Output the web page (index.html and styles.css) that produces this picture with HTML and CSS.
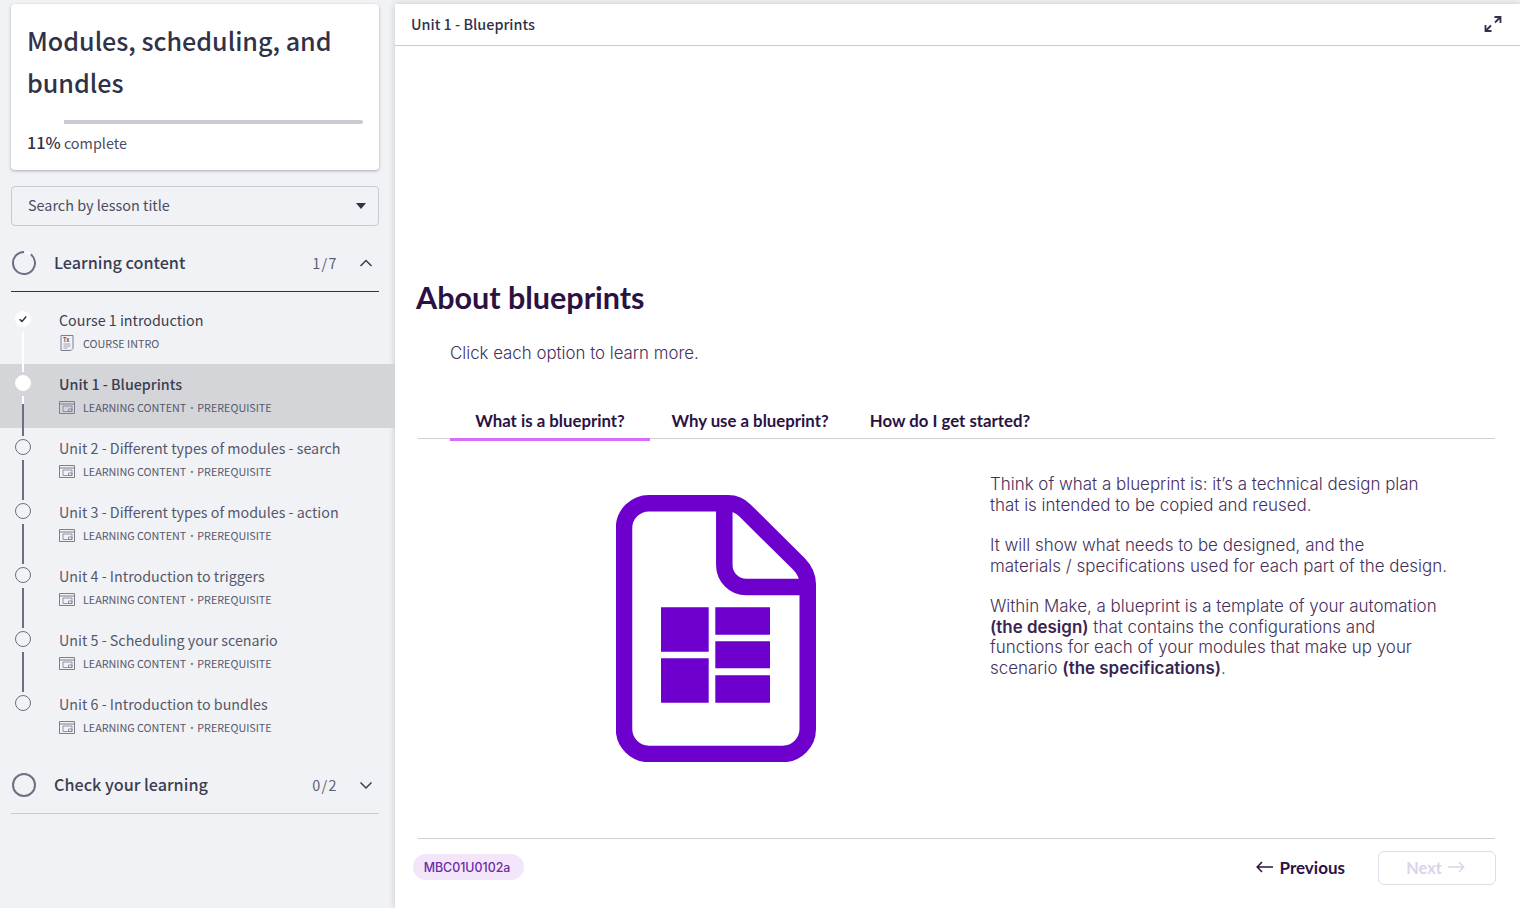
FILE: index.html
```html
<!DOCTYPE html>
<html lang="en">
<head>
<meta charset="utf-8">
<title>Unit 1 - Blueprints</title>
<link rel="stylesheet" href="styles.css">
</head>
<body>
<div class="app">
  <aside class="sidebar">
    <div class="card">
      <h1 class="course-title">Modules, scheduling, and bundles</h1>
      <div class="progress"><div class="progress-fill"></div></div>
      <div class="progress-label"><b>11%</b> complete</div>
    </div>
    <div class="search"><span>Search by lesson title</span><i class="caret"></i></div>

    <div class="section-head open">
      <svg class="ring" viewBox="0 0 24 24"><circle cx="12" cy="12" r="11" fill="none" stroke="#fff" stroke-width="2"/><circle cx="12" cy="12" r="11" fill="none" stroke="#6d7085" stroke-width="2" stroke-dasharray="61.5 7.6" transform="rotate(-52 12 12)"/></svg>
      <span class="section-title">Learning content</span>
      <span class="section-count">1/7</span>
      <svg class="chev" viewBox="0 0 14 14"><path d="M1.5 10 7 4.5 12.5 10" fill="none" stroke="#3a3d52" stroke-width="1.5"/></svg>
    </div>

    <ul class="lessons">
      <li class="lesson done">
        <span class="dot"><svg viewBox="0 0 16 16"><path d="M4.6 8.2 7 10.4 11.2 5.6" fill="none" stroke="#2f3248" stroke-width="1.5"/></svg></span>
        <div class="lesson-title">Course 1 introduction</div>
        <div class="lesson-meta">
          <svg class="doc-mini" viewBox="0 0 16 16"><path d="M2 .5h12v13l-2 2H2z" fill="none" stroke="#7c7f90"/><text x="4" y="6.8" class="tx">Tx</text><path d="M4.5 9h7M4.5 11h7M4.5 13h4" stroke="#8f91a0" fill="none" stroke-width=".8"/></svg>
          <span>COURSE INTRO</span>
        </div>
      </li>
      <li class="lesson current">
        <span class="dot"></span>
        <div class="lesson-title">Unit 1 - Blueprints</div>
        <div class="lesson-meta">
          <svg class="win" viewBox="0 0 16 13"><path d="M.5.5h15v12H.5zM.5 3h15" fill="none" stroke="#7c7f90"/><path d="M4 5h9v5.500H4zM9.500 8h3.500v2.500H9.500z" fill="none" stroke="#7c7f90" stroke-width=".8"/></svg>
          <span>LEARNING CONTENT<span class="sep">·</span>PREREQUISITE</span>
        </div>
      </li>
      <li class="lesson">
        <span class="dot"></span>
        <div class="lesson-title">Unit 2 - Different types of modules - search</div>
        <div class="lesson-meta">
          <svg class="win" viewBox="0 0 16 13"><path d="M.5.5h15v12H.5zM.5 3h15" fill="none" stroke="#7c7f90"/><path d="M4 5h9v5.500H4zM9.500 8h3.500v2.500H9.500z" fill="none" stroke="#7c7f90" stroke-width=".8"/></svg>
          <span>LEARNING CONTENT<span class="sep">·</span>PREREQUISITE</span>
        </div>
      </li>
      <li class="lesson">
        <span class="dot"></span>
        <div class="lesson-title">Unit 3 - Different types of modules - action</div>
        <div class="lesson-meta">
          <svg class="win" viewBox="0 0 16 13"><path d="M.5.5h15v12H.5zM.5 3h15" fill="none" stroke="#7c7f90"/><path d="M4 5h9v5.500H4zM9.500 8h3.500v2.500H9.500z" fill="none" stroke="#7c7f90" stroke-width=".8"/></svg>
          <span>LEARNING CONTENT<span class="sep">·</span>PREREQUISITE</span>
        </div>
      </li>
      <li class="lesson">
        <span class="dot"></span>
        <div class="lesson-title">Unit 4 - Introduction to triggers</div>
        <div class="lesson-meta">
          <svg class="win" viewBox="0 0 16 13"><path d="M.5.5h15v12H.5zM.5 3h15" fill="none" stroke="#7c7f90"/><path d="M4 5h9v5.500H4zM9.500 8h3.500v2.500H9.500z" fill="none" stroke="#7c7f90" stroke-width=".8"/></svg>
          <span>LEARNING CONTENT<span class="sep">·</span>PREREQUISITE</span>
        </div>
      </li>
      <li class="lesson">
        <span class="dot"></span>
        <div class="lesson-title">Unit 5 - Scheduling your scenario</div>
        <div class="lesson-meta">
          <svg class="win" viewBox="0 0 16 13"><path d="M.5.5h15v12H.5zM.5 3h15" fill="none" stroke="#7c7f90"/><path d="M4 5h9v5.500H4zM9.500 8h3.500v2.500H9.500z" fill="none" stroke="#7c7f90" stroke-width=".8"/></svg>
          <span>LEARNING CONTENT<span class="sep">·</span>PREREQUISITE</span>
        </div>
      </li>
      <li class="lesson last">
        <span class="dot"></span>
        <div class="lesson-title">Unit 6 - Introduction to bundles</div>
        <div class="lesson-meta">
          <svg class="win" viewBox="0 0 16 13"><path d="M.5.5h15v12H.5zM.5 3h15" fill="none" stroke="#7c7f90"/><path d="M4 5h9v5.500H4zM9.500 8h3.500v2.500H9.500z" fill="none" stroke="#7c7f90" stroke-width=".8"/></svg>
          <span>LEARNING CONTENT<span class="sep">·</span>PREREQUISITE</span>
        </div>
      </li>
    </ul>

    <div class="section-head closed">
      <svg class="ring" viewBox="0 0 24 24"><circle cx="12" cy="12" r="11" fill="none" stroke="#6d7085" stroke-width="2"/></svg>
      <span class="section-title">Check your learning</span>
      <span class="section-count">0/2</span>
      <svg class="chev" viewBox="0 0 14 14"><path d="M1.5 4.500 7 10l5.500-5.500" fill="none" stroke="#3a3d52" stroke-width="1.500"/></svg>
    </div>
  </aside>

  <main class="main">
    <header class="topbar">
      <span class="topbar-title">Unit 1 - Blueprints</span>
      <svg class="expand" viewBox="0 0 18 18"><path d="M10.500 2h6v6M16 2.500 11 7.500M7.500 16h-6v-6M2 15.500 7 10.500" fill="none" stroke="#2f3248" stroke-width="1.800"/></svg>
    </header>
    <div class="content">
      <h2 class="page-title">About blueprints</h2>
      <p class="intro">Click each option to learn more.</p>
      <div class="tabs">
        <div class="tab active">What is a blueprint?</div>
        <div class="tab">Why use a blueprint?</div>
        <div class="tab">How do I get started?</div>
      </div>
      <div class="panel">
        <div class="panel-art">
          <svg class="blueprint" viewBox="0 0 200 267">
            <path d="M33 8.250H112Q122 8.250 129 15.500L183 69Q191.750 78 191.750 89V234a25 25 0 0 1-25 25H33a25 25 0 0 1-25-25V33A25 25 0 0 1 33 8.250Z" fill="none" stroke="#6d00cc" stroke-width="16.500"/>
            <path d="M108.300 8.250V70a22 22 0 0 0 22 22H191.750" fill="none" stroke="#6d00cc" stroke-width="16.500"/>
            <path d="M45 112.300h47.700v44.400H45zM45 163.300h47.700v44.400H45zM99.300 112.300H154v27.400H99.300zM99.300 146.300H154v27H99.300zM99.300 180.300H154v27.400H99.300z" fill="#6d00cc"/>
          </svg>
        </div>
        <div class="panel-text">
          <p>Think of what a blueprint is: it’s a technical design plan<br>that is intended to be copied and reused.</p>
          <p>It will show what needs to be designed, and the<br>materials / specifications used for each part of the design.</p>
          <p>Within Make, a blueprint is a template of your automation<br><b>(the design)</b> that contains the configurations and<br>functions for each of your modules that make up your<br>scenario <b>(the specifications)</b>.</p>
        </div>
      </div>
    </div>
    <footer class="footer">
      <span class="pill">MBC01U0102a</span>
      <div class="nav">
        <span class="prev"><svg class="arrow" viewBox="0 0 18 12"><path d="M6 1 1.200 6 6 11M1.500 6H17" fill="none" stroke="currentColor" stroke-width="1.500"/></svg>Previous</span>
        <span class="next">Next<svg class="arrow" viewBox="0 0 18 12"><path d="M12 1l4.800 5L12 11M16.500 6H1" fill="none" stroke="currentColor" stroke-width="1.500"/></svg></span>
      </div>
    </footer>
  </main>
</div>
</body>
</html>
```

FILE: styles.css
```css
* { box-sizing: border-box; }
html, body { margin: 0; padding: 0; height: 908px; overflow: hidden; }
body { background: #f1f2f5; font-family: "Noto Sans CJK SC", "Noto Sans", sans-serif; color: #2f3248; }
.app { display: flex; height: 908px; }

.sidebar { width: 395px; flex: none; padding-top: 4px; }
.card { margin: 0 16px 16px 11px; height: 166px; padding: 15px 16px 0; background: #fff; border-radius: 4px; box-shadow: 0 1px 3px rgba(30, 32, 50, .35); }
.course-title { margin: 0; font-size: 25.100px; line-height: 42px; font-weight: 500; color: #2f3248; }
.progress { margin-top: 17px; height: 4px; background: #c9cbd4; border-radius: 2px; }
.progress-fill { width: 37px; height: 4px; background: #fff; }
.progress-label { margin-top: 7px; font-size: 14.400px; line-height: 22px; color: #4a4d62; }
.progress-label b { font-size: 16.200px; font-weight: 500; color: #2f3248; }

.search { margin: 0 16px 12px 11px; height: 40px; display: flex; align-items: center; justify-content: space-between; padding: 0 12px 2px 16px; border: 1px solid #c9cbd4; border-radius: 4px; font-size: 14.400px; line-height: 22px; color: #4a4d62; }
.caret { width: 0; height: 0; border-left: 5px solid transparent; border-right: 5px solid transparent; border-top: 6px solid #2f3248; margin-top: 2px; }

.section-head { margin: 0 16px 0 11px; height: 54px; display: flex; align-items: center; padding-left: 1px; }
.section-head.open { border-bottom: 1px solid #2f3248; padding-bottom: 3px; }
.section-head.closed { height: 58px; margin-top: 8px; border-bottom: 1px solid #c9cbd4; }
.ring { width: 24px; height: 24px; flex: none; }
.section-title { margin-left: 18px; margin-top: -1px; flex: 1; font-size: 16.200px; line-height: 24px; font-weight: 500; color: #3a3d52; }
.open .section-title { margin-top: -3px; }
.section-count { font-size: 14.400px; letter-spacing: 1.400px; color: #5c5f73; line-height: 22px; }
.chev { width: 14px; height: 14px; margin-left: 21px; margin-right: 6px; flex: none; }

.lessons { list-style: none; margin: 8px 0 0; padding: 0; }
.lesson { position: relative; height: 64px; padding: 8px 0 0 59px; }
.lesson.current { background: #d4d5d9; }
.lesson::after { content: ""; position: absolute; left: 22px; top: 32px; width: 2px; height: 40px; background: #6d7085; z-index: 1; }
.lesson.done::after { background: #fff; }
.lesson.current::after { background: linear-gradient(#fff 0 8px, #6d7085 8px); }
.lesson.last::after { display: none; }
.dot { position: absolute; left: 15px; top: 11px; width: 16px; height: 16px; border-radius: 50%; border: 1px solid #6d7085; }
.done .dot, .current .dot { background: #fff; border-color: #fff; }
.done .dot svg { display: block; width: 16px; height: 16px; margin: -1px; }
.lesson-title { font-size: 14.300px; line-height: 24px; color: #55586c; white-space: nowrap; }
.done .lesson-title { color: #3a3d52; }
.current .lesson-title { font-weight: 500; color: #3a3d52; }
.lesson-meta { display: flex; align-items: center; gap: 8px; height: 22px; font-size: 10.750px; color: #55586c; white-space: nowrap; }
.sep { display: inline-block; width: 11px; text-align: center; color: #7c7f90; }
.win, .doc-mini { width: 16px; flex: none; }
.win { height: 13px; }
.doc-mini { height: 16px; }
.tx { font-size: 5.500px; font-weight: 700; fill: #55586c; }

.main { flex: 1; margin-top: 4px; display: flex; flex-direction: column; background: #fff; box-shadow: 0 0 7px rgba(30, 32, 50, .2); }
.topbar { height: 42px; flex: none; display: flex; align-items: center; justify-content: space-between; padding: 0 18px 0 16px; border-bottom: 1px solid #c9cbd4; }
.topbar-title { font-size: 14.400px; font-weight: 500; color: #2f3248; line-height: 22px; margin-top: -1px; }
.expand { width: 18px; height: 18px; margin-top: -1px; }

.content { flex: 1; padding: 230px 25px 0 21px; font-family: Inter, sans-serif; }
.page-title { margin: 0; font-family: Lato, sans-serif; font-size: 30.500px; line-height: 42px; font-weight: 700; color: #2b1243; }
.intro { margin: 23px 0 0 34px; font-size: 16.850px; line-height: 24px; font-weight: 300; color: #45305c; }
.tabs { margin: 36px 0 0 2px; display: flex; padding-left: 32px; border-bottom: 1px solid #d4ccd8; height: 38px; }
.tab { width: 200px; height: 40px; padding-top: 9px; text-align: center; font-family: Lato, sans-serif; font-size: 16.800px; line-height: 22px; font-weight: 700; color: #2b1243; }
.tab.active { border-bottom: 3px solid #d76cf5; }

.panel { display: flex; }
.panel-art { width: 574px; flex: none; padding: 56px 0 0 200px; }
.blueprint { display: block; width: 200px; height: 267px; }
.panel-text { width: 480px; padding-top: 35px; font-size: 16.950px; line-height: 20.500px; font-weight: 300; color: #45305c; white-space: nowrap; }
.panel-text p { margin: 0 0 20px; }
.panel-text b { font-weight: 600; color: #3a2550; }

.footer { height: 70px; flex: none; margin: 0 25px 0 23px; display: flex; align-items: center; justify-content: space-between; border-top: 1px solid #d4ccd8; font-family: Inter, sans-serif; }
.pill { margin-left: -5px; margin-top: -13px; width: 111px; height: 26px; padding-right: 3px; border-radius: 13px; background: #f3e6fb; color: #6d2aa8; font-size: 12.400px; font-weight: 500; line-height: 27px; text-align: center; }
.nav { display: flex; align-items: center; margin-right: -1px; margin-top: -13px; }
.prev { display: flex; align-items: center; gap: 6px; font-family: Lato, sans-serif; font-weight: 700; font-size: 17px; color: #2b1243; margin-right: 33px; }
.next { display: flex; align-items: center; justify-content: center; gap: 5px; width: 118px; height: 34px; margin-top: 2px; padding: 0 3px 2px 0; border: 1px solid #e2dde8; border-radius: 6px; font-family: Lato, sans-serif; font-weight: 700; font-size: 16.300px; color: #ddd3e8; }
.arrow { width: 18px; height: 12px; flex: none; }
```
